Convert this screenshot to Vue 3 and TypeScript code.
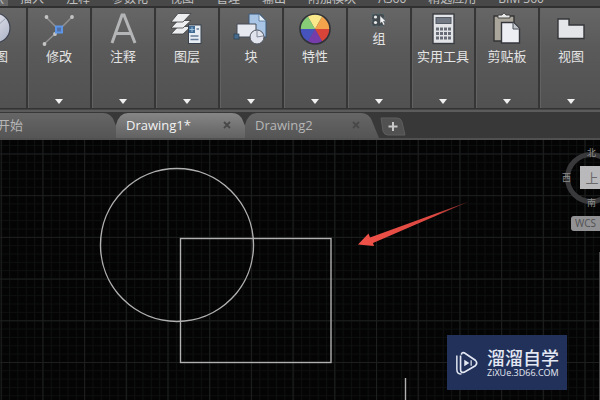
<script setup lang="ts">
import { ref } from 'vue'

interface Panel {
  id: string
  label: string
  small?: boolean
}

const menus: string[] = ['默认', '插入', '注释', '参数化', '视图', '管理', '输出', '附加模块', 'A360', '精选应用', 'BIM 360']

const panels: Panel[] = [
  { id: 'draw', label: '绘图' },
  { id: 'modify', label: '修改' },
  { id: 'annotate', label: '注释' },
  { id: 'layers', label: '图层' },
  { id: 'block', label: '块' },
  { id: 'properties', label: '特性' },
  { id: 'group', label: '组', small: true },
  { id: 'utilities', label: '实用工具' },
  { id: 'clipboard', label: '剪贴板' },
  { id: 'view', label: '视图' },
]

const tabs: string[] = ['开始', 'Drawing1*', 'Drawing2']
const activeTab = ref(1)
</script>

<template>
  <div class="app">
    <nav class="menubar">
      <button v-for="(menu, i) in menus" :key="menu" class="menu" :class="{ current: i === 0 }">{{ menu }}</button>
    </nav>

    <div class="ribbon">
      <button v-for="panel in panels" :key="panel.id" class="panel" :class="{ small: panel.small }">
        <svg v-if="panel.id === 'draw'" class="icon" viewBox="0 0 36 36">
          <defs>
            <linearGradient id="ball" x1="0" y1="0" x2="1" y2="1">
              <stop offset="0" stop-color="#f4f5fa" />
              <stop offset="1" stop-color="#aab0c4" />
            </linearGradient>
          </defs>
          <circle cx="18" cy="18" r="15" fill="url(#ball)" stroke="#3e4250" stroke-width="1.2" />
          <path d="M18 18 29 8" stroke="#9aa0b0" />
        </svg>

        <svg v-else-if="panel.id === 'modify'" class="icon" viewBox="0 0 36 36">
          <path d="M5 7 18 20M31 7 15 23 3 34" fill="none" stroke="#8f8f90" stroke-width="1.6" />
          <g fill="#c4c4c4">
            <circle cx="5.500" cy="7" r="1.900" />
            <circle cx="31" cy="7" r="1.900" />
            <circle cx="14" cy="24" r="1.900" />
            <circle cx="3.500" cy="34" r="1.900" />
          </g>
          <rect x="15" y="16.500" width="6" height="6" fill="#4f6fa6" stroke="#5d95e6" stroke-width="2" />
        </svg>

        <svg v-else-if="panel.id === 'annotate'" class="icon" viewBox="0 0 36 36">
          <path d="M7 33 17 5h2l11 28M11 23.500h15" fill="none" stroke="#b4b5b6" stroke-width="3" />
        </svg>

        <svg v-else-if="panel.id === 'layers'" class="icon" viewBox="0 0 36 36">
          <g fill="#eceeef" stroke="#3c3e40" stroke-width="0.8">
            <path d="M2 24 9 16.500h13L14 24z" />
            <path d="M2 18 9 10.500h13L14 18z" />
            <path d="M2 12 9 3.500h13L14 12z" />
          </g>
          <rect x="19.500" y="15" width="12.500" height="18.500" fill="#e8edf4" stroke="#39434f" />
          <rect x="20" y="16" width="6" height="7" fill="#416b93" />
          <path d="M23 17v5M20.500 19.500h5" stroke="#9fc3df" />
          <path d="M27.500 19h2.500M21.500 26h8M21.500 29.500h8" stroke="#657b97" stroke-width="1.4" />
        </svg>

        <svg v-else-if="panel.id === 'block'" class="icon" viewBox="0 0 36 36">
          <path d="M16 4h11l6 7v16H16z" fill="#a9c5e6" stroke="#3c5876" />
          <path d="M26 4v7h7z" fill="#e5f0fb" stroke="#54728f" stroke-width="0.8" />
          <path d="M4 14h19v13H4z" fill="#e6e9f0" stroke="#454c57" />
          <rect x="1" y="24" width="5" height="5" fill="#466b8c" stroke="#284052" stroke-width="0.700" />
          <circle cx="24" cy="27" r="7" fill="#e1e4ed" stroke="#4e545e" />
          <path d="M24 27v-6M24 27l6-1" stroke="#828997" fill="none" />
        </svg>

        <svg v-else-if="panel.id === 'properties'" class="icon" viewBox="0 0 36 36">
          <path d="M18 19 10.500 6A15 15 0 0 1 25.500 6z" fill="#fbe88a" />
          <path d="M18 19 25.500 6A15 15 0 0 1 33 19z" fill="#f2a34c" />
          <path d="M18 19H33A15 15 0 0 1 25.500 32z" fill="#d94439" />
          <path d="M18 19 25.500 32A15 15 0 0 1 10.500 32z" fill="#753caa" />
          <path d="M18 19 10.500 32A15 15 0 0 1 3 19z" fill="#4653bd" />
          <path d="M18 19H3A15 15 0 0 1 10.500 6z" fill="#87cd78" />
          <circle cx="18" cy="19" r="15" fill="none" stroke="#303238" stroke-width="1.6" />
        </svg>

        <svg v-else-if="panel.id === 'group'" class="icon" viewBox="0 0 18 18">
          <rect x="2" y="4" width="12" height="12" fill="#424a4e" stroke="#526a74" stroke-dasharray="3 2" />
          <circle cx="5.500" cy="7" r="1.600" fill="#e6e8e9" />
          <circle cx="5.500" cy="12.500" r="1.600" fill="#e6e8e9" />
          <path d="M10 5.500v8l1.800-1.500 1.500 3.200 1.700-.8-1.500-3h2.500z" fill="#f0f2f3" stroke="#45494c" stroke-width="0.500" />
        </svg>

        <svg v-else-if="panel.id === 'utilities'" class="icon" viewBox="0 0 36 36">
          <rect x="8" y="4" width="21" height="29.500" fill="#e2e4e8" stroke="#393c40" stroke-width="1.400" />
          <rect x="11" y="7.500" width="15" height="6" fill="#737985" stroke="#555b65" />
          <path d="M11 19h15M11 23.500h15M11 28h15" stroke="#676c76" stroke-width="3" stroke-dasharray="3 1" />
        </svg>

        <svg v-else-if="panel.id === 'clipboard'" class="icon" viewBox="0 0 36 36">
          <path d="M5 6h20v25H5z" fill="#aaa69c" stroke="#343434" stroke-width="1.400" />
          <path d="M9 8V5h4q2-4 4 0h4v3z" fill="#e8e8e6" stroke="#424242" />
          <path d="M12.500 12.500h12l6 6V33h-18z" fill="#eceef3" stroke="#35373c" stroke-width="1.400" />
          <path d="M24 12.500v6.500h6.500" fill="#c0c5cd" stroke="#464a51" />
        </svg>

        <svg v-else class="icon" viewBox="0 0 36 36">
          <path d="M5 9H16v6h15v13.500H5z" fill="#e4e5e9" stroke="#35363a" stroke-width="1.400" />
        </svg>

        <span class="caption">{{ panel.label }}</span>
        <svg class="expand" viewBox="0 0 8 5"><path d="M0 0h8L4 5z" fill="#f0f0f0" /></svg>
      </button>
    </div>

    <div class="tabs">
      <div v-for="(tab, i) in tabs" :key="tab" class="tab" :class="{ active: i === activeTab, home: i === 0 }">
        <svg class="shape" viewBox="0 0 134 26" preserveAspectRatio="none">
          <defs>
            <linearGradient id="tab-on" x1="0" y1="0" x2="0" y2="1">
              <stop offset="0" stop-color="#868686" />
              <stop offset="1" stop-color="#626262" />
            </linearGradient>
            <linearGradient id="tab-off" x1="0" y1="0" x2="0" y2="1">
              <stop offset="0" stop-color="#666" />
              <stop offset="1" stop-color="#555" />
            </linearGradient>
          </defs>
          <path
            d="M0 26V13Q3 1 12 1H116Q124 1 127 9L134 26z"
            :fill="i === activeTab ? 'url(#tab-on)' : 'url(#tab-off)'"
          />
        </svg>
        <button class="title" @click="activeTab = i">{{ tab }}</button>
        <button v-if="i > 0" class="close" :aria-label="'关闭 ' + tab">
          <svg viewBox="0 0 8 8"><path d="M1 1 7 7M7 1 1 7" stroke="#484848" stroke-width="1.800" /></svg>
        </button>
      </div>
      <button class="add" aria-label="新建">
        <svg viewBox="0 0 26 19">
          <path d="M1 1H17Q21 1 22 5L25 18H8Q4 18 3 14z" fill="#515151" stroke="#5e5e5e" />
          <path d="M13 5v9M8.500 9.500h9" stroke="#c8c8c8" stroke-width="2" />
        </svg>
      </button>
    </div>

    <main class="canvas">
      <svg class="drawing">
        <defs>
          <pattern id="minor" x="0.700" y="5.100" width="8.340" height="8.340" patternUnits="userSpaceOnUse">
            <path d="M0 .5H8.340M.5 0V8.340" stroke="#0e0f0f" stroke-width="1" />
          </pattern>
          <pattern id="major" x="0.700" y="13.500" width="41.700" height="41.700" patternUnits="userSpaceOnUse">
            <path d="M0 .5H41.700M.5 0V41.700" stroke="#1d1f1f" stroke-width="1" />
          </pattern>
          <linearGradient id="pointer" x1="0" y1="0" x2="1" y2="0">
            <stop offset="0" stop-color="#ef5148" />
            <stop offset="0.700" stop-color="#dc4841" />
            <stop offset="1" stop-color="#6b2422" />
          </linearGradient>
        </defs>
        <rect width="100%" height="100%" fill="url(#minor)" />
        <rect width="100%" height="100%" fill="url(#major)" />
        <g fill="none" stroke="#b0b0b0" stroke-width="1.400">
          <circle cx="177" cy="105" r="76.500" />
          <rect x="180.500" y="98.500" width="150.500" height="124" />
          <path d="M405.500 238V260" />
        </g>
        <path d="M358 104.500 368.500 93.500 370 97.500 469 61.500 373 103 374 106z" fill="url(#pointer)" />
      </svg>

      <div class="viewcube">
        <svg class="ring" viewBox="0 0 54 54"><circle cx="27" cy="27" r="23.500" fill="none" stroke="#39393b" stroke-width="5" /></svg>
        <span class="dir north">北</span>
        <span class="dir west">西</span>
        <span class="dir south">南</span>
        <button class="face">上</button>
      </div>
      <button class="wcs">WCS</button>
      <div class="navbar"></div>

      <aside class="brand">
        <svg class="logo" viewBox="0 0 26 26">
          <path d="M7 4Q7 1 10 2L22 10Q25 13 22 16L10 23Q6 24 6 20V5" fill="none" stroke="#e3e8f3" stroke-width="1.800" />
          <path d="M2 5V20Q2 25 7 25" fill="none" stroke="#e3e8f3" stroke-width="1.600" />
          <path d="M10 9.500 15.500 13 10 16.500z" fill="#e3e8f3" />
          <path d="M17.500 10v6" stroke="#e3e8f3" stroke-width="1.300" />
        </svg>
        <div class="words">
          <strong>溜溜自学</strong>
          <small>ZiXUe.3D66.COM</small>
        </div>
      </aside>
    </main>
  </div>
</template>

<style>
body {
  margin: 0;
  background: #050505;
}
</style>

<style scoped>
.app {
  display: flex;
  flex-direction: column;
  min-height: 100vh;
  overflow: hidden;
  background: #3b3b3b;
  font-family: "Open Sans", "Noto Sans CJK SC", sans-serif;
  color: #e4e4e4;
}

button {
  margin: 0;
  padding: 0;
  border: 0;
  background: none;
  color: inherit;
  font: inherit;
}

.menubar {
  display: flex;
  align-items: flex-end;
  gap: 22px;
  height: 6px;
  overflow: hidden;
  background: #484848;
  border-bottom: 2px solid #303030;
}

.menu {
  flex: none;
  font-size: 12px;
  line-height: 14px;
  color: #c2c2c2;
  white-space: nowrap;
}

.menu.current {
  margin-left: -24px;
  padding: 0 4px;
  margin-right: -10px;
  background: #666;
}

.ribbon {
  display: flex;
  margin-left: -37px;
  height: 101px;
  background: #333;
}

.panel {
  flex: none;
  display: flex;
  flex-direction: column;
  align-items: center;
  box-sizing: border-box;
  width: 64px;
  padding: 2px 0 4px;
  border-right: 1px solid #363636;
  border-left: 1px solid #363636;
  border-bottom: 1px solid #333;
  background: linear-gradient(#666, #5a5a5a 40%, #515151);
  box-shadow: inset 1px 0 #626262;
}

.panel:last-child {
  flex: 1 0 64px;
}

.icon {
  width: 36px;
  height: 36px;
}

.small .icon {
  width: 18px;
  height: 18px;
}

.caption {
  font-size: 13px;
  line-height: 20px;
  white-space: nowrap;
}

.expand {
  width: 8px;
  height: 5px;
  margin-top: auto;
}

.tabs {
  display: flex;
  box-sizing: border-box;
  height: 31px;
  padding-top: 4px;
  border-top: 1px solid #444;
  border-bottom: 2px solid #505050;
  background: linear-gradient(#5b5b5b 2px, #383838 2px);
}

.tab {
  position: relative;
  display: flex;
  align-items: center;
  justify-content: space-between;
  box-sizing: border-box;
  width: 129px;
  padding: 0 14px 2px 10px;
  font-size: 13px;
  line-height: 18px;
  color: #b6b6b6;
}

.tab.home {
  margin-left: -13px;
}

.tab.active {
  color: #f2f2f2;
  font-weight: 500;
}

.shape {
  position: absolute;
  left: 0;
  bottom: 0;
  width: 134px;
  height: 26px;
}

.title,
.close {
  position: relative;
}

.close svg {
  display: block;
  width: 8px;
  height: 8px;
}

.add {
  align-self: center;
  margin-left: 6px;
}

.add svg {
  display: block;
  width: 26px;
  height: 19px;
}

.canvas {
  position: relative;
  flex: 1;
  overflow: hidden;
  background: #040405;
}

.drawing {
  position: absolute;
  inset: 0;
  width: 100%;
  height: 100%;
}

.viewcube {
  position: absolute;
  top: 11px;
  right: -18px;
  width: 54px;
  height: 54px;
}

.ring {
  position: absolute;
  inset: 0;
}

.dir {
  position: absolute;
  font-size: 9px;
  line-height: 10px;
  color: #8d8d8d;
}

.north {
  top: -3px;
  left: 23px;
}

.west {
  top: 22px;
  left: -2px;
}

.south {
  bottom: -3px;
  left: 23px;
}

.face {
  position: absolute;
  top: 15px;
  left: 16px;
  width: 24px;
  height: 23px;
  background: #b9b9bb;
  color: #69696c;
  font-size: 13px;
  line-height: 22px;
}

.wcs {
  position: absolute;
  top: 76px;
  right: -12px;
  box-sizing: border-box;
  width: 41px;
  height: 15px;
  padding-left: 4px;
  border-radius: 3px;
  background: #929294;
  color: #505052;
  font-size: 10px;
  line-height: 15px;
  text-align: left;
}

.navbar {
  position: absolute;
  top: 112px;
  right: 0;
  bottom: 0;
  width: 1px;
  background: #4a4a4a;
}

.brand {
  position: absolute;
  right: 33px;
  bottom: 10px;
  display: flex;
  align-items: center;
  gap: 8px;
  box-sizing: border-box;
  width: 120px;
  height: 55px;
  padding-left: 8px;
  background: #22315a;
  color: #e3e8f3;
}

.logo {
  width: 24px;
  height: 26px;
}

.words {
  display: flex;
  flex-direction: column;
}

.words strong {
  font-size: 18px;
  font-weight: 500;
  line-height: 20px;
  white-space: nowrap;
}

.words small {
  font-size: 9px;
  line-height: 10px;
  white-space: nowrap;
}
</style>
